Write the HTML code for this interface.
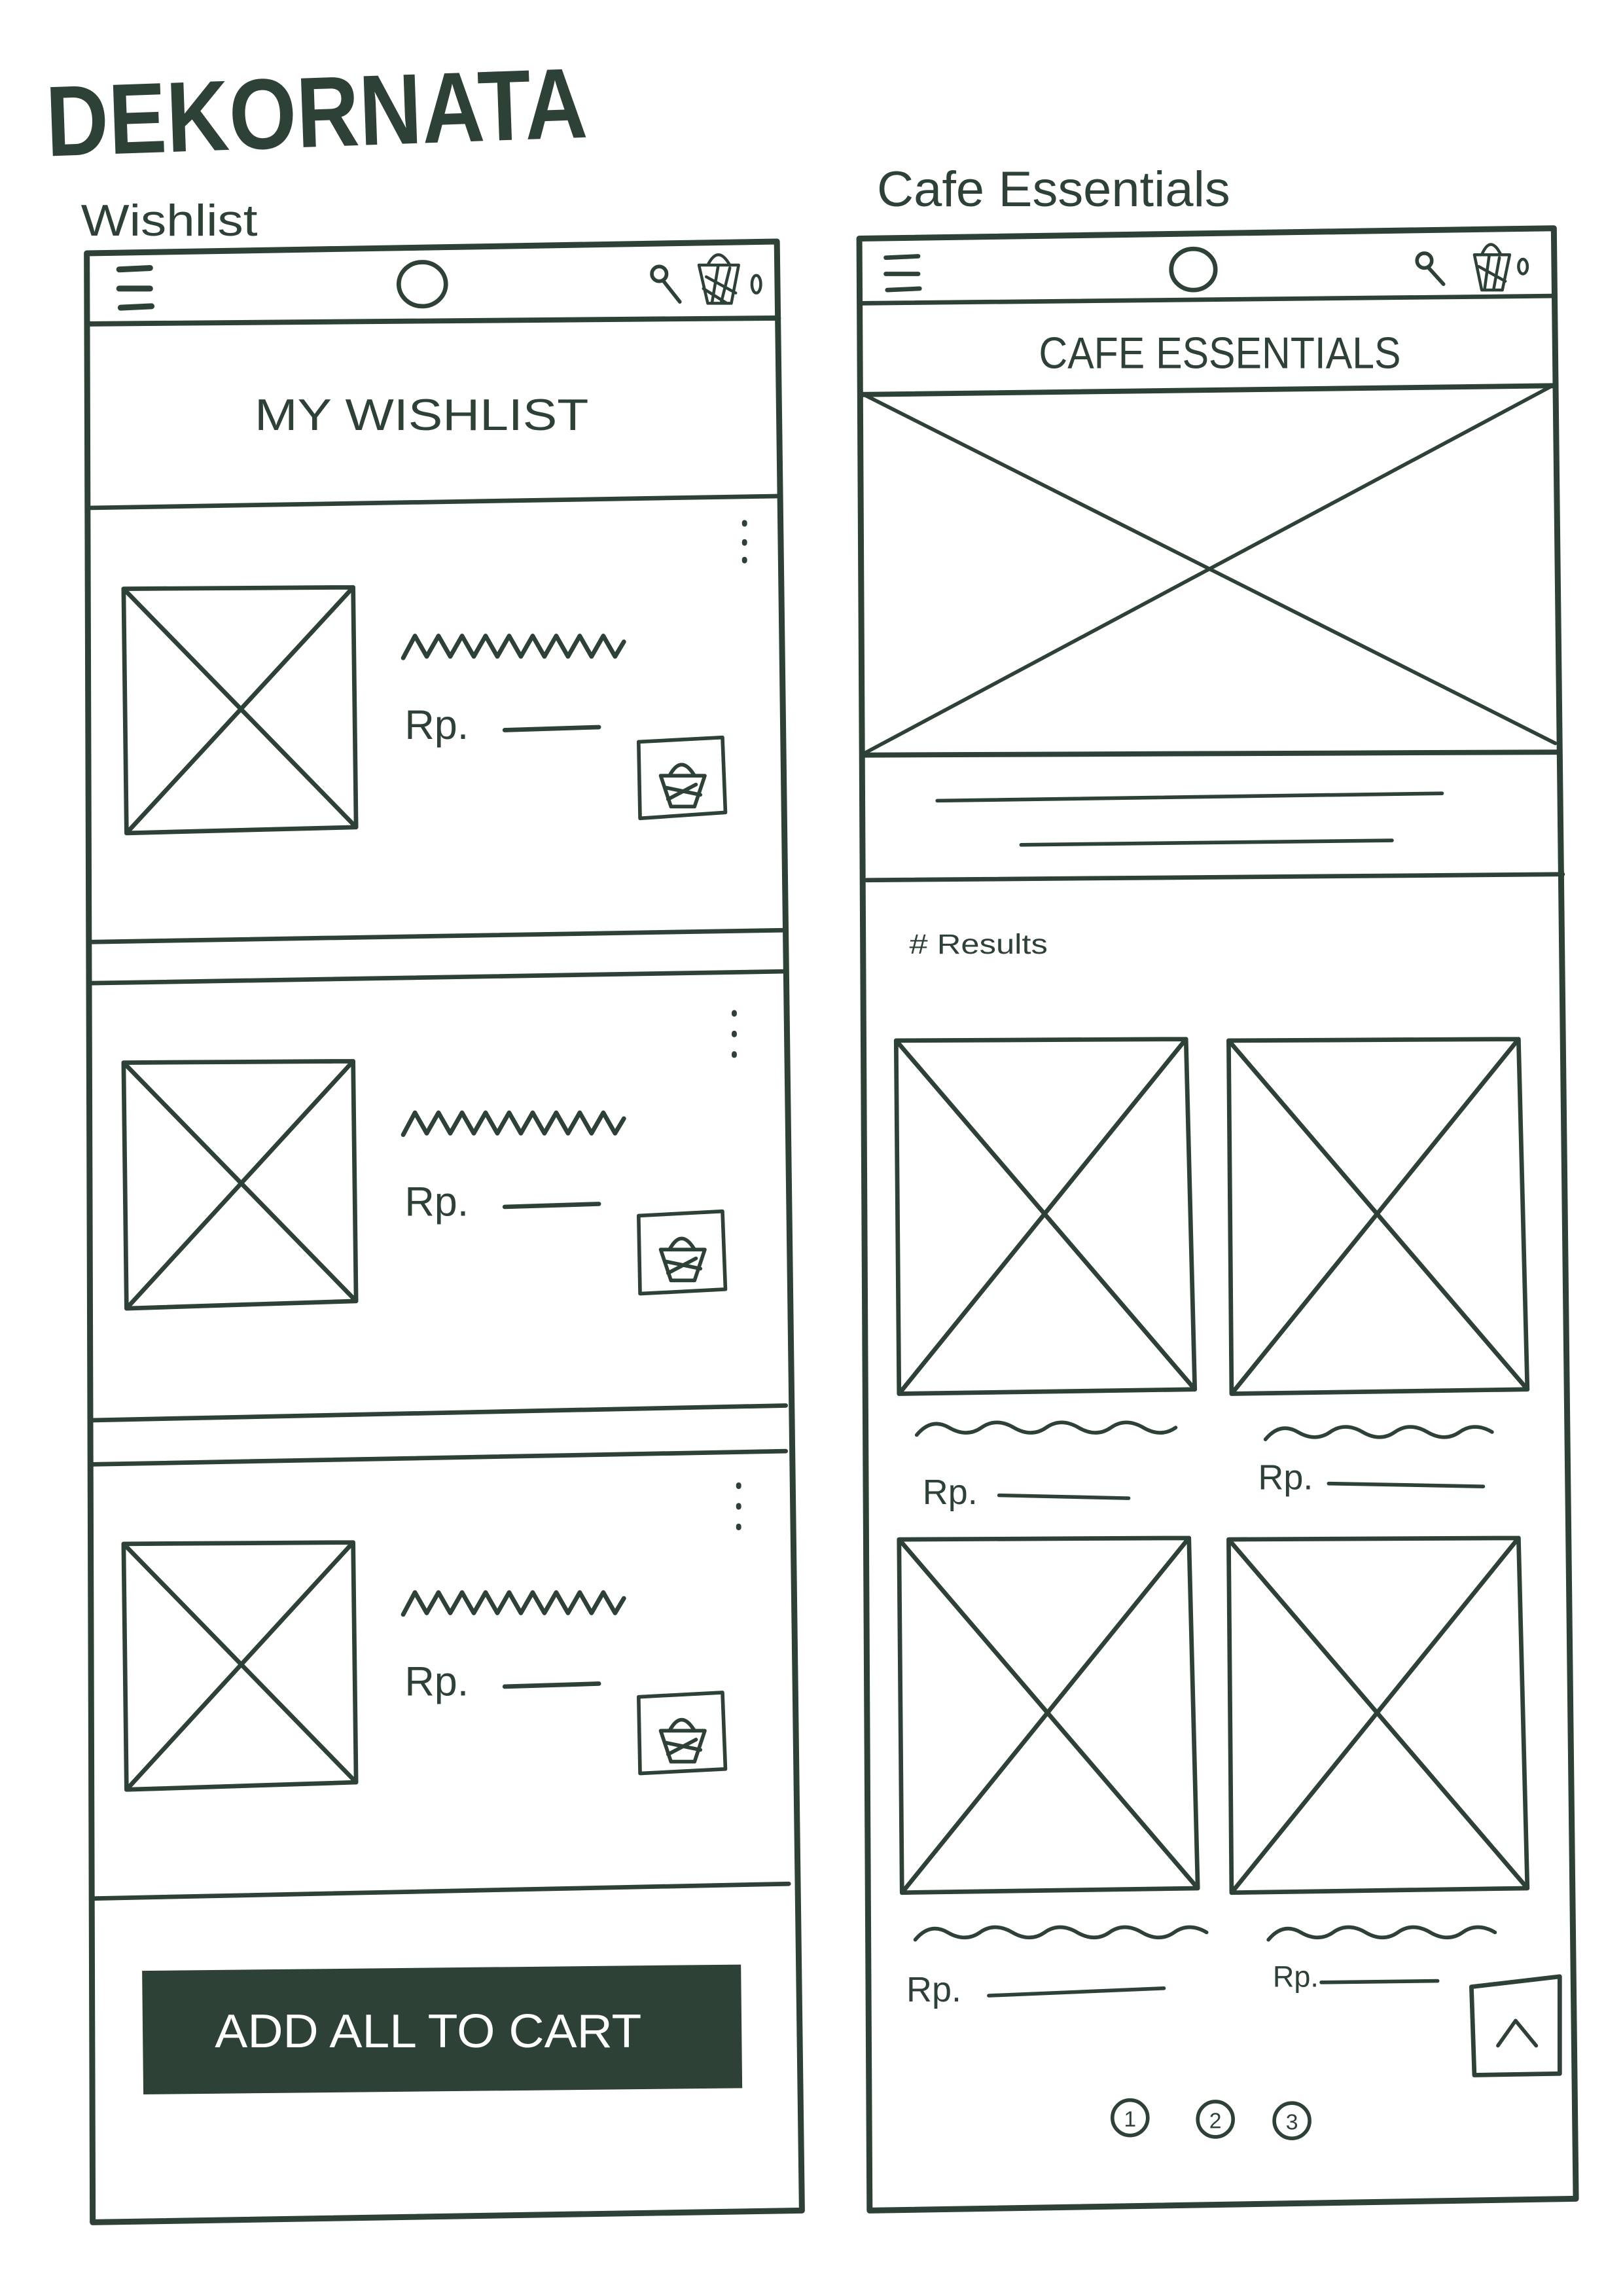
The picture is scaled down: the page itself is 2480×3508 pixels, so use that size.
<!DOCTYPE html>
<html><head><meta charset="utf-8"><style>
html,body{margin:0;padding:0;background:#fff;}
svg{display:block;}
text{font-family:"Liberation Sans",sans-serif;fill:#2e4137;}
</style></head><body>
<svg width="2480" height="3508" viewBox="0 0 1103 1560" xmlns="http://www.w3.org/2000/svg">
<g stroke="#2e4137" fill="none" stroke-linecap="round" stroke-linejoin="round">
<path d="M59 172 L528 164 L545 1502 L63 1510 Z" stroke-width="4"/>
<path d="M60 220 L529 216" stroke-width="3.5"/>
<path d="M81 183 L102 182 M81 196 L102 196 M82 209 L103 208" stroke-width="4"/>
<ellipse cx="287" cy="193" rx="16" ry="15" stroke-width="3"/>
<circle cx="448" cy="186" r="5" stroke-width="2.5"/><path d="M451 191 L462 205" stroke-width="2.5"/>
<path d="M475 180 L502 180 L497 206 L481 206 Z M481 180 Q488 166 496 180 M480 188 L500 199 M478 196 L494 206 M488 181 L484 205 M496 182 L490 206" stroke-width="2"/>
<ellipse cx="514" cy="193" rx="3" ry="6" stroke-width="2"/>
<path d="M62 345 L529 337" stroke-width="3"/>
<path d="M62 640 L532 632 M62 668 L532 660" stroke-width="3"/>
<path d="M62 965 L534 955 M62 995 L534 986" stroke-width="3"/>
<path d="M62 1290 L536 1280" stroke-width="3"/>
<g stroke-width="3">
<path d="M84 400 L240 399 L242 562 L86 566 Z M84 400 L242 562 M240 399 L86 566"/>
<path d="M84 722 L240 721 L242 884 L86 889 Z M84 722 L242 884 M240 721 L86 889"/>
<path d="M84 1049 L240 1048 L242 1211 L86 1216 Z M84 1049 L242 1211 M240 1048 L86 1216"/>
</g>
<g stroke-width="3">
<path d="M274 447 l8 -15 8 14 8 -14 8 14 8 -14 8 14 8 -14 8 14 8 -14 8 14 8 -14 8 14 8 -14 8 14 8 -14 8 14 8 -14 8 14 6 -10"/>
<path d="M274 771 l8 -15 8 14 8 -14 8 14 8 -14 8 14 8 -14 8 14 8 -14 8 14 8 -14 8 14 8 -14 8 14 8 -14 8 14 8 -14 8 14 6 -10"/>
<path d="M274 1097 l8 -15 8 14 8 -14 8 14 8 -14 8 14 8 -14 8 14 8 -14 8 14 8 -14 8 14 8 -14 8 14 8 -14 8 14 8 -14 8 14 6 -10"/>
<path d="M343 496 L407 494 M343 820 L407 818 M343 1146 L407 1144"/>
</g>
<g stroke-width="2.5">
<path d="M434 504 L491 501 L493 552 L435 556 Z M434 826 L491 823 L493 876 L435 879 Z M434 1153 L491 1150 L493 1202 L435 1205 Z"/>
<path d="M449 527 L479 527 L472 548 L456 548 Z M455 527 Q463 512 472 527 M452 535 L476 540 M454 543 L473 533"/>
<path d="M449 849 L479 849 L472 870 L456 870 Z M455 849 Q463 834 472 849 M452 857 L476 862 M454 865 L473 855"/>
<path d="M449 1176 L479 1176 L472 1197 L456 1197 Z M455 1176 Q463 1161 472 1176 M452 1184 L476 1189 M454 1192 L473 1182"/>
</g>
<g stroke-width="3.5">
<path d="M506 355 v1 M506 368 v1 M506 380 v1 M499 688 v1 M499 702 v1 M499 716 v1 M502 1009 v1 M502 1023 v1 M502 1037 v1"/>
</g>
<path d="M584 162 L1056 155 L1071 1494 L591 1502 Z" stroke-width="4"/>
<path d="M585 206 L1055 201" stroke-width="3"/>
<path d="M602 175 L624 174 M602 186 L624 186 M603 197 L625 196" stroke-width="3"/>
<ellipse cx="811" cy="183" rx="15" ry="14" stroke-width="3"/>
<circle cx="968" cy="177" r="5" stroke-width="2.5"/><path d="M971 182 L981 193" stroke-width="2.5"/>
<path d="M1002 173 L1026 173 L1021 197 L1007 197 Z M1007 173 Q1013 159 1020 173 M1005 181 L1023 191 M1012 174 L1009 196 M1019 175 L1015 197" stroke-width="2"/>
<ellipse cx="1035" cy="181" rx="3" ry="5" stroke-width="2"/>
<path d="M585 268 L1055 262" stroke-width="3.5"/>
<path d="M587 268 L1057 505 M1055 262 L587 512" stroke-width="2.5"/>
<path d="M587 513 L1058 511" stroke-width="3.5"/>
<path d="M637 544 L980 539 M694 574 L946 571" stroke-width="2.5"/>
<path d="M589 598 L1062 594" stroke-width="3"/>
<g stroke-width="3">
<path d="M609 707 L806 706 L812 944 L611 947 Z M609 707 L812 944 M806 706 L611 947"/>
<path d="M835 707 L1032 706 L1038 944 L837 947 Z M835 707 L1038 944 M1032 706 L837 947"/>
<path d="M611 1046 L808 1045 L814 1283 L613 1286 Z M611 1046 L814 1283 M808 1045 L613 1286"/>
<path d="M835 1046 L1032 1045 L1038 1283 L837 1286 Z M835 1046 L1038 1283 M1032 1045 L837 1286"/>
</g>
<g stroke-width="2.5">
<path d="M623 975 q10 -12 22 -5 t22 0 t22 0 t22 0 t22 0 t22 0 t22 0 t22 0"/>
<path d="M860 978 q10 -12 22 -5 t22 0 t22 0 t22 0 t22 0 t22 0 t22 0"/>
<path d="M622 1318 q10 -12 22 -5 t22 0 t22 0 t22 0 t22 0 t22 0 t22 0 t22 0 t22 0"/>
<path d="M862 1318 q10 -12 22 -5 t22 0 t22 0 t22 0 t22 0 t22 0 t22 0"/>
<path d="M679 1016 L767 1018 M903 1008 L1008 1010 M672 1356 L791 1351 M898 1347 L977 1346"/>
</g>
<path d="M1000 1350 L1060 1343 L1060 1409 L1002 1410 Z" stroke-width="3"/>
<path d="M1018 1390 L1030 1373 L1044 1390" stroke-width="2.5"/>
<g stroke-width="2.5">
<circle cx="768" cy="1439" r="12"/><circle cx="826" cy="1440" r="12"/><circle cx="878" cy="1441" r="12"/>
</g>
</g>
<rect x="97" y="1337" width="407" height="84" fill="#2e4137" transform="rotate(-0.6 300 1380)"/>
<text x="146" y="1391" font-size="32" textLength="290" lengthAdjust="spacingAndGlyphs" style="fill:#fff">ADD ALL TO CART</text>
<text x="32" y="106" font-size="68" font-weight="bold" textLength="368" lengthAdjust="spacingAndGlyphs" transform="rotate(-2 32 106)">DEKORNATA</text>
<text x="55" y="160" font-size="30" textLength="120" lengthAdjust="spacingAndGlyphs">Wishlist</text>
<text x="596" y="140" font-size="34" textLength="240" lengthAdjust="spacingAndGlyphs">Cafe Essentials</text>
<text x="173" y="292" font-size="30" textLength="227" lengthAdjust="spacingAndGlyphs">MY WISHLIST</text>
<text x="706" y="250" font-size="30" textLength="246" lengthAdjust="spacingAndGlyphs">CAFE ESSENTIALS</text>
<text x="618" y="648" font-size="19" textLength="94" lengthAdjust="spacingAndGlyphs"># Results</text>
<g font-size="28">
<text x="275" y="502">Rp.</text><text x="275" y="826">Rp.</text><text x="275" y="1152">Rp.</text>
</g>
<g font-size="24">
<text x="627" y="1022">Rp.</text><text x="855" y="1012">Rp.</text><text x="616" y="1360">Rp.</text><text x="865" y="1350" font-size="20">Rp.</text>
</g>
<g font-size="15" text-anchor="middle">
<text x="768" y="1445">1</text><text x="826" y="1446">2</text><text x="878" y="1447">3</text>
</g>
</svg>
</body></html>
